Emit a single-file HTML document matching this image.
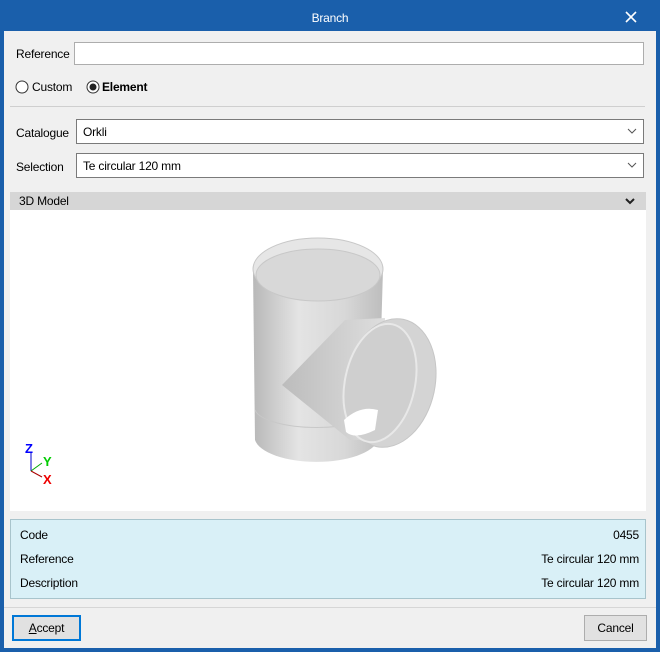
<!DOCTYPE html>
<html><head><style>
*{box-sizing:border-box;margin:0;padding:0}
body{width:660px;height:652px;background:#1a5fab;font-family:"Liberation Sans",sans-serif;font-size:12px;letter-spacing:-0.2px;color:#000;position:relative;overflow:hidden}
.a{position:absolute}
.win{left:4px;top:31px;width:652px;height:617px;background:#f0f0f0}
.inp{background:#fff;border:1px solid #adadad}
.cb{background:#fff;border:1px solid #7a7a7a}
.chev{position:absolute;right:6px;top:6px}
</style></head><body>
<div class="a" style="left:0;top:0;width:660px;height:31px;color:#fff;font-size:12px;text-align:center;line-height:36px">Branch</div>
<svg class="a" style="left:625px;top:11px" width="12" height="12"><path d="M1 1L11 11M11 1L1 11" stroke="#fff" stroke-width="1.6"/></svg>
<div class="a win"></div>
<div class="a" style="left:16px;top:47px">Reference</div>
<div class="a inp" style="left:74px;top:42px;width:570px;height:23px"></div>
<svg class="a" style="left:15px;top:80px" width="14" height="14"><circle cx="7" cy="7" r="6" fill="#fff" stroke="#333"/></svg>
<div class="a" style="left:32px;top:80px">Custom</div>
<svg class="a" style="left:86px;top:80px" width="14" height="14"><circle cx="7" cy="7" r="6" fill="#fff" stroke="#333"/><circle cx="7" cy="7" r="3.5" fill="#222"/></svg>
<div class="a" style="left:102px;top:80px;font-weight:bold">Element</div>
<div class="a" style="left:10px;top:106px;width:635px;height:1px;background:#cfcfcf"></div>
<div class="a" style="left:16px;top:126px">Catalogue</div>
<div class="a cb" style="left:76px;top:119px;width:568px;height:25px"><span class="a" style="left:6px;top:5px">Orkli</span><svg class="chev" width="10" height="10"><path d="M1 3L5 7L9 3" stroke="#555" fill="none"/></svg></div>
<div class="a" style="left:16px;top:160px">Selection</div>
<div class="a cb" style="left:76px;top:153px;width:568px;height:25px"><span class="a" style="left:6px;top:5px">Te circular 120 mm</span><svg class="chev" width="10" height="10"><path d="M1 3L5 7L9 3" stroke="#555" fill="none"/></svg></div>
<div class="a" style="left:10px;top:192px;width:636px;height:18px;background:#d6d6d6"><span class="a" style="left:9px;top:2px">3D Model</span><svg class="a" style="left:614px;top:4px" width="12" height="10"><path d="M2 3L6 7L10 3" stroke="#222" stroke-width="2" fill="none"/></svg></div>
<div class="a" style="left:10px;top:210px;width:636px;height:301px;background:#fff"></div>
<svg class="a" style="left:0;top:0" width="660" height="520">
<defs>
<linearGradient id="g" x1="0" x2="1"><stop offset="0" stop-color="#b8b8b8"/><stop offset=".35" stop-color="#e4e4e4"/><stop offset=".7" stop-color="#d8d8d8"/><stop offset="1" stop-color="#bdbdbd"/></linearGradient>
<linearGradient id="g2" x1="0" x2="1"><stop offset="0" stop-color="#bcbcbc"/><stop offset="1" stop-color="#dedede"/></linearGradient>
</defs>
<path d="M253 269 L255 440 A62 25 0 0 0 378 440 L383 269 Z" fill="url(#g)"/>
<ellipse cx="318" cy="269" rx="65" ry="31" fill="#e6e6e6" stroke="#c8c8c8"/>
<ellipse cx="318" cy="275" rx="62" ry="26" fill="#d8d8d8" stroke="#c8c8c8"/>
<path d="M255 410 A62 20 0 0 0 378 410" fill="none" stroke="#c8c8c8"/>
<path d="M282 385 L345 320 L385 318 L380 440 L350 440 Z" fill="url(#g2)"/>
<ellipse cx="390" cy="383" rx="45" ry="65" transform="rotate(12 390 383)" fill="#d4d4d4" stroke="#c6c6c6"/>
<ellipse cx="380" cy="383" rx="35" ry="60" transform="rotate(12 380 383)" fill="#cfcfcf" stroke="#e8e8e8" stroke-width="2"/>
<path d="M344 420 Q360 405 378 410 L375 430 Q355 440 346 432 Z" fill="#fff"/>
<path d="M31 471V452" stroke="#00c"/><text x="25" y="453" fill="#00f" font-weight="bold" font-size="13">Z</text>
<path d="M31 471L42 463" stroke="#0a0"/><text x="43" y="466" fill="#0c0" font-weight="bold" font-size="13">Y</text>
<path d="M31 471L42 477" stroke="#a00"/><text x="43" y="484" fill="#e00" font-weight="bold" font-size="13">X</text>
</svg>
<div class="a" style="left:10px;top:519px;width:636px;height:80px;background:#d9f0f7;border:1px solid #a8c4cc"></div>
<div class="a" style="left:20px;top:528px">Code</div><div class="a" style="right:21px;top:528px">0455</div>
<div class="a" style="left:20px;top:552px">Reference</div><div class="a" style="right:21px;top:552px">Te circular 120 mm</div>
<div class="a" style="left:20px;top:576px">Description</div><div class="a" style="right:21px;top:576px">Te circular 120 mm</div>
<div class="a" style="left:4px;top:607px;width:652px;height:1px;background:#d6d6d6"></div>
<div class="a" style="left:12px;top:615px;width:69px;height:26px;border:2px solid #0078d7;background:#e1e1e1;text-align:center;line-height:22px"><u>A</u>ccept</div>
<div class="a" style="left:584px;top:615px;width:63px;height:26px;border:1px solid #adadad;background:#e1e1e1;text-align:center;line-height:24px">Cancel</div>
</body></html>
